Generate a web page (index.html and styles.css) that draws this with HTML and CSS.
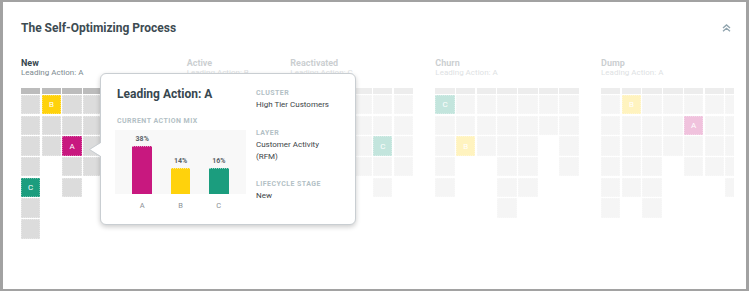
FILE: index.html
```html
<!DOCTYPE html>
<html lang="en">
<head>
<meta charset="utf-8">
<title>The Self-Optimizing Process</title>
<link rel="stylesheet" href="styles.css">
</head>
<body>
<div class="frame">
  <div class="header">
    <h1 class="title">The Self-Optimizing Process</h1>
    <svg class="collapse" width="9" height="8" viewBox="0 0 9 8"><path d="M1 4 L4.5 1 L8 4 M1 7.3 L4.5 4.3 L8 7.3" fill="none" stroke="#90a4ae" stroke-width="1.4"/></svg>
  </div>

  <div class="stages">
    <div class="stage">
      <div class="stage-name">New</div>
      <div class="stage-sub">Leading Action: A</div>
      <div class="grid g7">
        <b></b><b></b><b></b><b></b><b></b><b></b><b></b>
        <i class="c"></i><i class="c y">B</i><i class="c"></i><i class="c"></i><i class="c"></i><i class="c"></i><i class="c"></i>
        <i class="c"></i><i class="c"></i><i class="c"></i><i class="c"></i><i class="c"></i><i class="c"></i><i class="c"></i>
        <i class="c"></i><i class="c"></i><i class="c m">A</i><i class="c"></i><i class="c"></i><i class="c"></i><i class="c"></i>
        <i class="c"></i><i></i><i class="c"></i><i class="c"></i><i class="c"></i><i class="c"></i><i class="c"></i>
        <i class="c g">C</i><i></i><i class="c"></i><i></i><i class="c"></i><i></i><i class="c"></i>
        <i class="c"></i><i></i><i></i><i></i><i></i><i></i><i></i>
        <i class="c"></i><i></i><i></i><i></i><i></i><i></i><i></i>
      </div>
    </div>

    <div class="stage faded">
      <div class="stage-name">Active</div>
      <div class="stage-sub">Leading Action: B</div>
      <div class="grid g4">
        <b></b><b></b><b></b><b></b>
        <i class="c"></i><i class="c"></i><i class="c y">B</i><i class="c"></i>
        <i class="c"></i><i class="c"></i><i class="c"></i><i class="c"></i>
        <i class="c"></i><i class="c"></i><i class="c"></i><i class="c"></i>
        <i class="c"></i><i class="c"></i><i></i><i class="c"></i>
        <i class="c"></i><i></i><i></i><i></i>
        <i></i><i></i><i></i><i></i>
        <i></i><i></i><i></i><i></i>
      </div>
    </div>

    <div class="stage faded">
      <div class="stage-name">Reactivated</div>
      <div class="stage-sub">Leading Action: C</div>
      <div class="grid g6">
        <b></b><b></b><b></b><b></b><b></b><b></b>
        <i class="c"></i><i class="c"></i><i class="c"></i><i class="c"></i><i class="c"></i><i class="c"></i>
        <i class="c"></i><i class="c"></i><i class="c"></i><i class="c"></i><i class="c"></i><i class="c"></i>
        <i class="c"></i><i class="c"></i><i class="c"></i><i class="c"></i><i class="c g">C</i><i class="c"></i>
        <i class="c"></i><i class="c"></i><i class="c"></i><i class="c"></i><i class="c"></i><i class="c"></i>
        <i class="c"></i><i class="c"></i><i></i><i></i><i class="c"></i><i></i>
        <i></i><i></i><i></i><i></i><i></i><i></i>
        <i></i><i></i><i></i><i></i><i></i><i></i>
      </div>
    </div>

    <div class="stage faded">
      <div class="stage-name">Churn</div>
      <div class="stage-sub">Leading Action: A</div>
      <div class="grid g7">
        <b></b><b></b><b></b><b></b><b></b><b></b><b></b>
        <i class="c g">C</i><i class="c"></i><i class="c"></i><i class="c"></i><i class="c"></i><i class="c"></i><i class="c"></i>
        <i class="c"></i><i class="c"></i><i class="c"></i><i class="c"></i><i class="c"></i><i class="c"></i><i class="c"></i>
        <i class="c"></i><i class="c y">B</i><i class="c"></i><i class="c"></i><i class="c"></i><i></i><i class="c"></i>
        <i class="c"></i><i></i><i></i><i class="c"></i><i class="c"></i><i></i><i class="c"></i>
        <i class="c"></i><i></i><i></i><i class="c"></i><i class="c"></i><i></i><i></i>
        <i></i><i></i><i></i><i class="c"></i><i></i><i></i><i></i>
        <i></i><i></i><i></i><i></i><i></i><i></i><i></i>
      </div>
    </div>

    <div class="stage faded">
      <div class="stage-name">Dump</div>
      <div class="stage-sub">Leading Action: A</div>
      <div class="grid g7">
        <b></b><b></b><b></b><b></b><b></b><b></b><b></b>
        <i class="c"></i><i class="c y">B</i><i class="c"></i><i class="c"></i><i class="c"></i><i class="c"></i><i class="c"></i>
        <i class="c"></i><i class="c"></i><i class="c"></i><i class="c"></i><i class="c m">A</i><i class="c"></i><i class="c"></i>
        <i class="c"></i><i class="c"></i><i class="c"></i><i class="c"></i><i class="c"></i><i class="c"></i><i class="c"></i>
        <i class="c"></i><i class="c"></i><i class="c"></i><i></i><i class="c"></i><i class="c"></i><i class="c"></i>
        <i class="c"></i><i class="c"></i><i class="c"></i><i></i><i></i><i></i><i class="c"></i>
        <i class="c"></i><i></i><i class="c"></i><i></i><i></i><i></i><i></i>
        <i></i><i></i><i></i><i></i><i></i><i></i><i></i>
      </div>
    </div>
  </div>

  <div class="tooltip">
    <svg class="tip-arrow" width="14" height="18" viewBox="0 0 14 18"><path d="M13.5 1.5 L1.5 8.5 L13.5 15.5 Z" fill="#fff"/><path d="M12.5 1.5 L1.5 8.5 L12.5 15.5" fill="none" stroke="#c9ced2" stroke-width="1"/></svg>
    <div class="tip-left">
      <div class="tip-title">Leading Action: A</div>
      <div class="tip-label mix">CURRENT ACTION MIX</div>
      <div class="chart">
        <div class="bar-col"><span class="pct">38%</span><span class="bar bar-a" style="height:48px"></span></div>
        <div class="bar-col"><span class="pct">14%</span><span class="bar bar-b" style="height:26px"></span></div>
        <div class="bar-col"><span class="pct">16%</span><span class="bar bar-c" style="height:26px"></span></div>
      </div>
      <div class="axis"><span>A</span><span>B</span><span>C</span></div>
    </div>
    <div class="tip-right">
      <div class="tip-label">CLUSTER</div>
      <div class="tip-value">High Tier Customers</div>
      <div class="tip-label gap">LAYER</div>
      <div class="tip-value">Customer Activity<br>(RFM)</div>
      <div class="tip-label gap">LIFECYCLE STAGE</div>
      <div class="tip-value">New</div>
    </div>
  </div>
</div>
</body>
</html>
```

FILE: styles.css
```css
* { box-sizing: border-box; margin: 0; padding: 0; }

body {
  margin: 0;
  background: #fff;
  font-family: Roboto, "Noto Sans", "Liberation Sans", sans-serif;
}

.frame {
  position: relative;
  width: 749px;
  height: 291px;
  border: 3px solid #a2a2a2;
  border-top-width: 2px;
  border-bottom-width: 2px;
  padding: 0 12px 0 18px;
  overflow: hidden;
  background: #fff;
}

.header {
  display: flex;
  justify-content: space-between;
  align-items: center;
  margin-top: 19px;
  height: 14px;
}

.title {
  font-size: 12px;
  line-height: 14px;
  font-weight: 700;
  color: #3d4b52;
}

.collapse { margin-right: 3px; }

.stages {
  display: flex;
  gap: 22.2px;
  margin-top: 23px;
  overflow: hidden;
}

.stage { flex: none; }
.stage.faded { opacity: 0.26; }

.stage-name {
  font-size: 9px;
  line-height: 10px;
  font-weight: 700;
  color: #37474f;
}

.stage-sub {
  font-size: 8px;
  line-height: 9px;
  color: #7d8a90;
  white-space: nowrap;
}

.grid {
  display: grid;
  grid-template-rows: 5.7px repeat(7, 19.4px);
  gap: 1.3px;
  margin-top: 11px;
}
.g7 { grid-template-columns: repeat(7, 19.4px); }
.g6 { grid-template-columns: repeat(6, 19.4px); }
.g4 { grid-template-columns: repeat(4, 19.4px); }

.grid b { background: #bcbcbc; }
.grid i {
  display: flex;
  align-items: center;
  justify-content: center;
  font-style: normal;
  font-size: 8px;
  color: #fff;
}
.grid i.c {
  background: #dcdcdc;
  outline: 1px dotted rgba(255,255,255,0.35);
  outline-offset: -1px;
}
.grid i.y { background: #ffd20c; }
.grid i.m { background: #c8187f; }
.grid i.g { background: #1b9d7e; }

/* tooltip */
.tooltip {
  position: absolute;
  left: 97px;
  top: 71px;
  width: 256px;
  height: 152px;
  background: #fff;
  border: 1px solid #c9ced2;
  border-radius: 6px;
  box-shadow: 0 2px 5px rgba(0,0,0,0.2);
  display: flex;
  padding: 13.4px 0 0 14px;
}

.tip-arrow {
  position: absolute;
  left: -13px;
  top: 67px;
}

.tip-left { width: 131px; flex: none; }

.tip-title {
  font-size: 12px;
  line-height: 14px;
  font-weight: 700;
  color: #37474f;
  padding-left: 2px;
}

.tip-label {
  font-size: 7px;
  line-height: 9px;
  font-weight: 700;
  letter-spacing: 0.45px;
  color: #b3bfc5;
  white-space: nowrap;
}
.tip-label.mix { margin-top: 15.6px; padding-left: 2px; }
.tip-label.gap { margin-top: 17.5px; }

.chart {
  margin-top: 4px;
  height: 64px;
  background: #f8f8f8;
  display: flex;
  justify-content: center;
  align-items: flex-end;
  gap: 18.8px;
}

.bar-col {
  width: 19.5px;
  display: flex;
  flex-direction: column;
  align-items: center;
}

.pct {
  font-size: 7px;
  line-height: 9px;
  font-weight: 700;
  color: #5b6468;
  margin-bottom: 2px;
}

.bar {
  display: block;
  width: 19.5px;
  border-top: 1px dotted rgba(255,255,255,0.55);
}
.bar-a { background: #c8187f; }
.bar-b { background: #ffd20c; }
.bar-c { background: #1b9d7e; }

.axis {
  display: flex;
  justify-content: center;
  gap: 18.8px;
  margin-top: 7px;
}
.axis span {
  width: 19.5px;
  text-align: center;
  font-size: 7.5px;
  line-height: 9px;
  color: #8b9195;
}

.tip-right {
  margin-left: 10px;
  padding-top: 1.7px;
}

.tip-value {
  font-size: 8px;
  line-height: 12px;
  color: #3c4448;
  margin-top: 1px;
}
```
